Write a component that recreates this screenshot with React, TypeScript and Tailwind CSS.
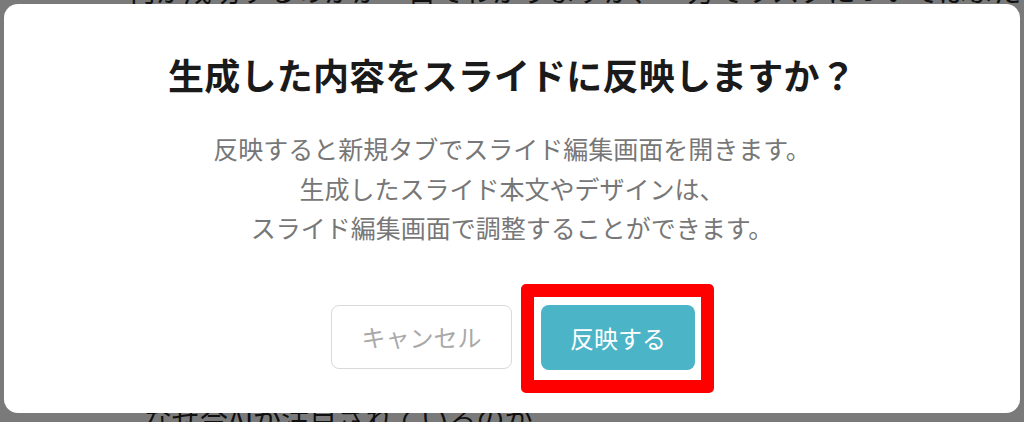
export default function App() {
  return (
    <div
      className="relative w-[1024px] h-[422px] overflow-hidden bg-white"
      style={{ fontFamily: '"Noto Sans CJK JP", "Noto Sans", sans-serif' }}
    >
      {/* page behind the dialog */}
      <div className="flex flex-col pl-[128px] text-[#222] text-[28px] leading-[36px]">
        <p className="-mt-[28px] whitespace-nowrap">
          何が成功するのかが一目でわかりますが、一方でリスクについてはまだ
        </p>
        <p className="mt-[392px] pl-[16px] whitespace-nowrap">なぜ今AIが注目されているのか</p>
      </div>

      {/* overlay */}
      <div className="absolute inset-0 bg-black/[0.52] px-[4px] pt-[4px]">
        <div className="w-full h-[409px] bg-white rounded-[14px] flex flex-col items-center pt-[52px]">
          <h2 className="text-[36px] leading-[36px] font-bold text-[#1a1a1a] tracking-[0.2px]">
            生成した内容をスライドに反映しますか？
          </h2>

          <div className="mt-[37px] flex flex-col items-center text-[25px] leading-[39px] text-[#777]">
            <p className="mb-[1px]">反映すると新規タブでスライド編集画面を開きます。</p>
            <p>生成したスライド本文やデザインは、</p>
            <p>スライド編集画面で調整することができます。</p>
          </div>

          <div className="mt-[58px] flex items-start gap-[29px] pl-[2px]">
            <button className="w-[181px] h-[64px] rounded-[8px] border border-[#d9d9d9] bg-white text-[24px] text-[#a9a9a9]">
              キャンセル
            </button>
            <div className="relative">
              <button className="w-[154px] h-[65px] rounded-[8px] bg-[#4bb4c6] text-[24px] text-white">
                反映する
              </button>
              <span className="pointer-events-none absolute -left-[20px] -right-[19px] -top-[21px] -bottom-[23px] border-[13px] border-[#ff0000] rounded-[5px]" />
            </div>
          </div>
        </div>
      </div>
    </div>
  );
}
